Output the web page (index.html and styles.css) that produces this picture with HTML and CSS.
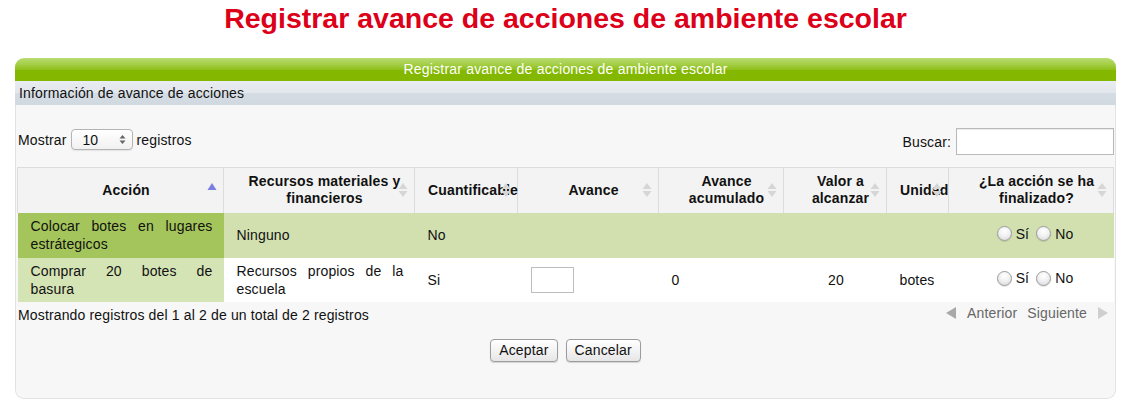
FILE: index.html
```html
<!DOCTYPE html>
<html lang="es">
<head>
<meta charset="utf-8">
<title>Registrar avance de acciones de ambiente escolar</title>
<link rel="stylesheet" href="styles.css">
</head>
<body>
<div class="page">
  <h1 class="title">Registrar avance de acciones de ambiente escolar</h1>
  <div class="panel">
    <div class="panel-head">Registrar avance de acciones de ambiente escolar</div>
    <div class="panel-sub">Información de avance de acciones</div>
    <div class="panel-body">
      <div class="controls">
        <div class="length">
          <span>Mostrar</span>
          <span class="select-wrap">
            <select class="select"><option>10</option><option>25</option><option>50</option><option>100</option></select>
            <svg class="select-arrows" width="7" height="11" viewBox="0 0 7 11"><path d="M3.5 1 L6.5 4.5 H0.5 Z M3.5 10 L6.5 6.5 H0.5 Z" fill="#666"/></svg>
          </span>
          <span>registros</span>
        </div>
        <div class="filter">
          <label for="buscar">Buscar:</label>
          <input id="buscar" class="search" type="text">
        </div>
      </div>
      <table class="grid">
        <colgroup>
          <col class="c1"><col class="c2"><col class="c3"><col class="c4"><col class="c5"><col class="c6"><col class="c7"><col class="c8">
        </colgroup>
        <thead>
          <tr>
            <th>Acción<svg class="sort" width="10" height="16" viewBox="0 0 10 16"><path d="M5 1 L9.5 8 H0.5 Z" fill="#7b7fe0"/></svg></th>
            <th>Recursos materiales y financieros<svg class="sort" width="10" height="16" viewBox="0 0 10 16"><path d="M5 1 L9.5 7 H0.5 Z M5 15 L9.5 9 H0.5 Z" fill="#d6d6d6"/></svg></th>
            <th class="nowrap">Cuantificable<svg class="sort" width="10" height="16" viewBox="0 0 10 16"><path d="M5 1 L9.5 7 H0.5 Z M5 15 L9.5 9 H0.5 Z" fill="#d6d6d6"/></svg></th>
            <th>Avance<svg class="sort" width="10" height="16" viewBox="0 0 10 16"><path d="M5 1 L9.5 7 H0.5 Z M5 15 L9.5 9 H0.5 Z" fill="#d6d6d6"/></svg></th>
            <th>Avance acumulado<svg class="sort" width="10" height="16" viewBox="0 0 10 16"><path d="M5 1 L9.5 7 H0.5 Z M5 15 L9.5 9 H0.5 Z" fill="#d6d6d6"/></svg></th>
            <th>Valor a alcanzar<svg class="sort" width="10" height="16" viewBox="0 0 10 16"><path d="M5 1 L9.5 7 H0.5 Z M5 15 L9.5 9 H0.5 Z" fill="#d6d6d6"/></svg></th>
            <th class="nowrap">Unidad<svg class="sort" width="10" height="16" viewBox="0 0 10 16"><path d="M5 1 L9.5 7 H0.5 Z M5 15 L9.5 9 H0.5 Z" fill="#d6d6d6"/></svg></th>
            <th>¿La acción se ha finalizado?<svg class="sort" width="10" height="16" viewBox="0 0 10 16"><path d="M5 1 L9.5 7 H0.5 Z M5 15 L9.5 9 H0.5 Z" fill="#d6d6d6"/></svg></th>
          </tr>
        </thead>
        <tbody>
          <tr class="odd">
            <td class="sorted just">Colocar botes en lugares estrátegicos</td>
            <td class="just">Ninguno</td>
            <td>No</td>
            <td></td>
            <td></td>
            <td class="center"></td>
            <td></td>
            <td class="center">
              <span class="radios">
                <input class="radio" type="radio" name="f1" id="f1s"><label for="f1s">Sí</label>
                <input class="radio" type="radio" name="f1" id="f1n"><label for="f1n">No</label>
              </span>
            </td>
          </tr>
          <tr class="even">
            <td class="sorted just">Comprar 20 botes de basura</td>
            <td class="just">Recursos propios de la escuela</td>
            <td>Si</td>
            <td><input class="avance" type="text"></td>
            <td>0</td>
            <td class="center">20</td>
            <td>botes</td>
            <td class="center">
              <span class="radios">
                <input class="radio" type="radio" name="f2" id="f2s"><label for="f2s">Sí</label>
                <input class="radio" type="radio" name="f2" id="f2n"><label for="f2n">No</label>
              </span>
            </td>
          </tr>
        </tbody>
      </table>
      <div class="table-foot">
        <div class="info">Mostrando registros del 1 al 2 de un total de 2 registros</div>
        <div class="paging">
          <svg class="pg-arrow" width="12" height="14" viewBox="0 0 12 14"><path d="M1 7 L11 1 V13 Z" fill="#a9a9a9"/></svg>
          <span class="pg-link">Anterior</span>
          <span class="pg-link">Siguiente</span>
          <svg class="pg-arrow" width="12" height="14" viewBox="0 0 12 14"><path d="M11 7 L1 1 V13 Z" fill="#cfcfcf"/></svg>
        </div>
      </div>
      <div class="actions">
        <button class="btn" type="button">Aceptar</button>
        <button class="btn" type="button">Cancelar</button>
      </div>
    </div>
  </div>
</div>
</body>
</html>
```

FILE: styles.css
```css
* { box-sizing: border-box; }

body {
  margin: 0;
  background: #ffffff;
  font-family: "Liberation Sans", Arial, Helvetica, sans-serif;
  font-size: 14px;
  letter-spacing: 0.15px;
  color: #111;
}

.page {
  padding: 0 15px;
}

.title {
  margin: 2px 0 0;
  font-size: 28.5px;
  line-height: 32px;
  font-weight: bold;
  color: #dc0019;
  text-align: center;
  letter-spacing: 0;
}

.panel {
  margin-top: 24px;
}

.panel-head {
  height: 23px;
  line-height: 23px;
  text-align: center;
  color: #fff;
  font-size: 14px;
  letter-spacing: 0.2px;
  border-radius: 9px 9px 0 0;
  background: linear-gradient(#b9dc72 0%, #a6d04b 25%, #8fc01c 50%, #84b800 52%, #84b800 100%);
}

.panel-sub {
  height: 24px;
  line-height: 24px;
  padding-left: 4px;
  color: #111;
  background: linear-gradient(#e9ecf0 0%, #e2e7eb 50%, #d5dce3 52%, #d1d9e0 100%);
}

.panel-body {
  background: #f7f7f7;
  border: 1px solid #e2e2e2;
  border-top: none;
  border-radius: 0 0 9px 9px;
  padding: 23px 1px 36px;
}

.controls {
  display: flex;
  justify-content: space-between;
  align-items: flex-start;
  height: 27px;
}

.length {
  display: flex;
  align-items: center;
  gap: 4px;
  padding-top: 1px;
  padding-left: 1px;
}

.select-wrap {
  position: relative;
  display: inline-block;
}

.select {
  appearance: none;
  -webkit-appearance: none;
  width: 62px;
  height: 21px;
  border: 1px solid #b4b4b4;
  border-radius: 4px;
  background: linear-gradient(#ffffff, #f1f1f1);
  font-family: "Liberation Sans", Arial, sans-serif;
  font-size: 14px;
  padding: 0 0 0 11px;
  color: #111;
  box-shadow: 0 1px 1px rgba(0,0,0,0.08);
}

.select-arrows {
  position: absolute;
  right: 7px;
  top: 5px;
  pointer-events: none;
}

.filter {
  display: flex;
  align-items: center;
  gap: 5px;
  height: 27px;
}

.search {
  width: 158px;
  height: 27px;
  border: 1px solid #b9b9b9;
  background: #fff;
  box-shadow: inset 0 1px 1px rgba(0,0,0,0.08);
  font-family: inherit;
  font-size: 14px;
  padding: 2px 4px;
}

.grid {
  margin-top: 12px;
  width: 1096px;
  table-layout: fixed;
  border-collapse: collapse;
}

.c1 { width: 206px; }
.c2 { width: 191px; }
.c3 { width: 103px; }
.c4 { width: 141px; }
.c5 { width: 125px; }
.c6 { width: 103px; }
.c7 { width: 62px; }
.c8 { width: 165px; }

.grid th {
  position: relative;
  background: #f3f3f3;
  border: 1px solid #dcdcdc;
  border-bottom: none;
  padding: 5px 2px 5px 13px;
  line-height: 17px;
  height: 45px;
  font-weight: bold;
  text-align: center;
  vertical-align: middle;
  color: #111;
}

.grid th.nowrap {
  white-space: nowrap;
  text-align: left;
  overflow: visible;
}

.sort {
  position: absolute;
  right: 6px;
  top: 14px;
}

.grid td {
  padding: 4px 11px 4px 13px;
  line-height: 18px;
  height: 44px;
  vertical-align: middle;
}

.grid td.just {
  text-align: justify;
}

.grid td.center {
  text-align: center;
}

.grid tr.odd td { background: #d2e0b0; height: 45px; }
.grid tr.odd td.sorted { background: #a4c55b; }
.grid tr.even td { background: #ffffff; }
.grid tr.even td.sorted { background: #d5e4b5; }

.avance {
  display: block;
  width: 43px;
  height: 26px;
  border: 1px solid #bdbdbd;
  background: #fff;
  font-family: inherit;
  font-size: 14px;
}

.radios {
  display: inline-flex;
  align-items: center;
  gap: 4px;
  padding-left: 9px;
}

.radios label {
  margin-right: 3px;
}

.radio {
  appearance: none;
  -webkit-appearance: none;
  margin: 0;
  width: 15px;
  height: 15px;
  border-radius: 50%;
  border: 1px solid #9b9b9b;
  background: radial-gradient(circle at 50% 30%, #ffffff 0%, #f2f2f2 45%, #d4d4d4 100%);
  box-shadow: 0 1px 1px rgba(0,0,0,0.1);
}

.table-foot {
  display: flex;
  justify-content: space-between;
  align-items: center;
  padding: 4px 5px 0 1px;
  height: 22px;
}

.paging {
  display: flex;
  align-items: center;
  gap: 10px;
  color: #666;
  margin-top: -3px;
}

.pg-link {
  color: #666;
}

.actions {
  display: flex;
  justify-content: center;
  gap: 8px;
  margin-top: 15px;
}

.btn {
  height: 23px;
  padding: 0 8px;
  font-family: "Liberation Sans", Arial, sans-serif;
  font-size: 14px;
  letter-spacing: 0.15px;
  color: #111;
  border: 1px solid #9c9c9c;
  border-radius: 4px;
  background: linear-gradient(#ffffff, #f3f3f3 50%, #e6e6e6);
  box-shadow: 0 1px 1px rgba(0,0,0,0.15);
}
```
